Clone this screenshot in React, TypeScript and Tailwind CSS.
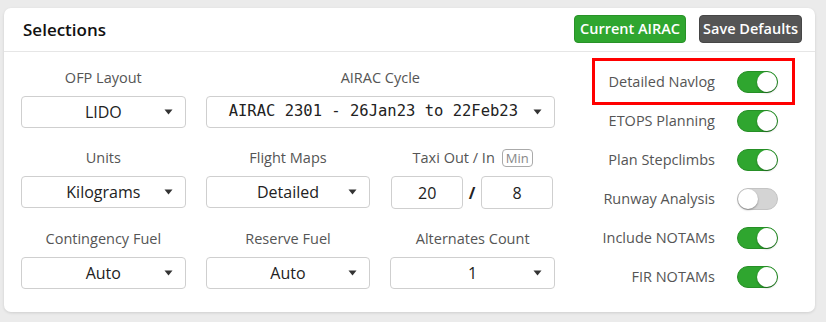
import React from "react";

const Caret = () => (
  <svg width="9" height="6" viewBox="0 0 9 6" className="absolute right-[12px] top-1/2 -translate-y-1/2">
    <path d="M0.5 0.5 L8.5 0.5 L4.5 5.5 Z" fill="#333" />
  </svg>
);

const Select = ({ value, mono }: { value: string; mono?: boolean }) => (
  <div className="relative h-[32px] rounded-[4px] border border-[#cfcfcf] bg-white flex items-center justify-center">
    <span
      className={
        mono
          ? "font-['DejaVu_Sans_Mono',monospace] text-[15.5px] text-[#222] pr-[14px]"
          : "text-[16px] text-[#222]"
      }
    >
      {value}
    </span>
    <Caret />
  </div>
);

const Field = ({ label, children, className }: { label: React.ReactNode; children: React.ReactNode; className?: string }) => (
  <div className={"flex flex-col gap-[8px] " + (className ?? "")}>
    <div className="h-[20px] flex items-center justify-center text-[14.5px] text-[#555]">{label}</div>
    {children}
  </div>
);

const Toggle = ({ on }: { on: boolean }) => (
  <div
    className={
      "relative w-[41px] h-[22px] rounded-full border " +
      (on ? "bg-[#2fa62f] border-[#268f26]" : "bg-[#d4d4d4] border-[#c4c4c4]")
    }
  >
    <div
      className={
        "absolute top-[0px] w-[20px] h-[20px] rounded-full bg-white shadow-[0_1px_2px_rgba(0,0,0,0.35)] " +
        (on ? "right-[0px]" : "left-[0px]")
      }
    />
  </div>
);

const ToggleRow = ({ label, on, highlight }: { label: string; on: boolean; highlight?: boolean }) => (
  <div
    className={
      "h-[39px] flex items-center justify-end gap-[22px] pr-[13px] " +
      (highlight ? "outline-[3px] outline-solid outline-[#ff0000] outline-offset-[1px]" : "")
    }
  >
    <span className="text-[14.5px] text-[#555]">{label}</span>
    <Toggle on={on} />
  </div>
);

export default function App() {
  return (
    <div className="w-[826px] h-[322px] bg-[#ebebeb] pt-[8px] pl-[4px] font-['Open_Sans',sans-serif]">
      <div className="w-[811px] h-[304px] bg-white rounded-[7px] shadow-[0_1px_3px_rgba(0,0,0,0.12)]">
        <div className="h-[44px] border-b border-[#e6e6e6] flex items-center justify-between pl-[19px] pr-[13px]">
          <h1 className="text-[17px] font-semibold text-[#111]">Selections</h1>
          <div className="flex items-center gap-[13px] -mt-[2px]">
            <button className="h-[28px] px-[5px] rounded-[4px] bg-[#2fa62f] border border-[#289228] text-white text-[14.5px] font-semibold">
              Current AIRAC
            </button>
            <button className="h-[28px] px-[3px] rounded-[4px] bg-[#555] border border-[#464646] text-white text-[14.5px] font-semibold">
              Save Defaults
            </button>
          </div>
        </div>
        <div className="flex items-start justify-between pl-[17px] pr-[24px] pt-[10px]">
          <div className="mt-[6px] w-[534px] grid grid-cols-3 content-start gap-x-[20px] gap-y-[20px]">
            <Field label="OFP Layout">
              <Select value="LIDO" />
            </Field>
            <Field label="AIRAC Cycle" className="col-span-2">
              <Select value="AIRAC 2301 - 26Jan23 to 22Feb23" mono />
            </Field>
            <Field label="Units">
              <Select value="Kilograms" />
            </Field>
            <Field label="Flight Maps">
              <Select value="Detailed" />
            </Field>
            <Field
              label={
                <span className="flex items-center gap-[7px]">
                  Taxi Out / In
                  <span className="h-[18px] px-[3px] rounded-[4px] border border-[#aaa] text-[13px] text-[#888] leading-[16px]">
                    Min
                  </span>
                </span>
              }
            >
              <div className="flex items-center gap-[5px] pl-[1px] pr-[2px]">
                <div className="flex-1 h-[33px] rounded-[4px] border border-[#cfcfcf] flex items-center justify-center text-[16px] text-[#222]">
                  20
                </div>
                <span className="w-[8px] text-center text-[16px] font-bold text-[#222]">/</span>
                <div className="flex-1 h-[33px] rounded-[4px] border border-[#cfcfcf] flex items-center justify-center text-[16px] text-[#222]">
                  8
                </div>
              </div>
            </Field>
            <Field label="Contingency Fuel">
              <Select value="Auto" />
            </Field>
            <Field label="Reserve Fuel">
              <Select value="Auto" />
            </Field>
            <Field label="Alternates Count">
              <Select value="1" />
            </Field>
          </div>
          <div className="w-[195px] flex flex-col">
            <ToggleRow label="Detailed Navlog" on highlight />
            <ToggleRow label="ETOPS Planning" on />
            <ToggleRow label="Plan Stepclimbs" on />
            <ToggleRow label="Runway Analysis" on={false} />
            <ToggleRow label="Include NOTAMs" on />
            <ToggleRow label="FIR NOTAMs" on />
          </div>
        </div>
      </div>
    </div>
  );
}
